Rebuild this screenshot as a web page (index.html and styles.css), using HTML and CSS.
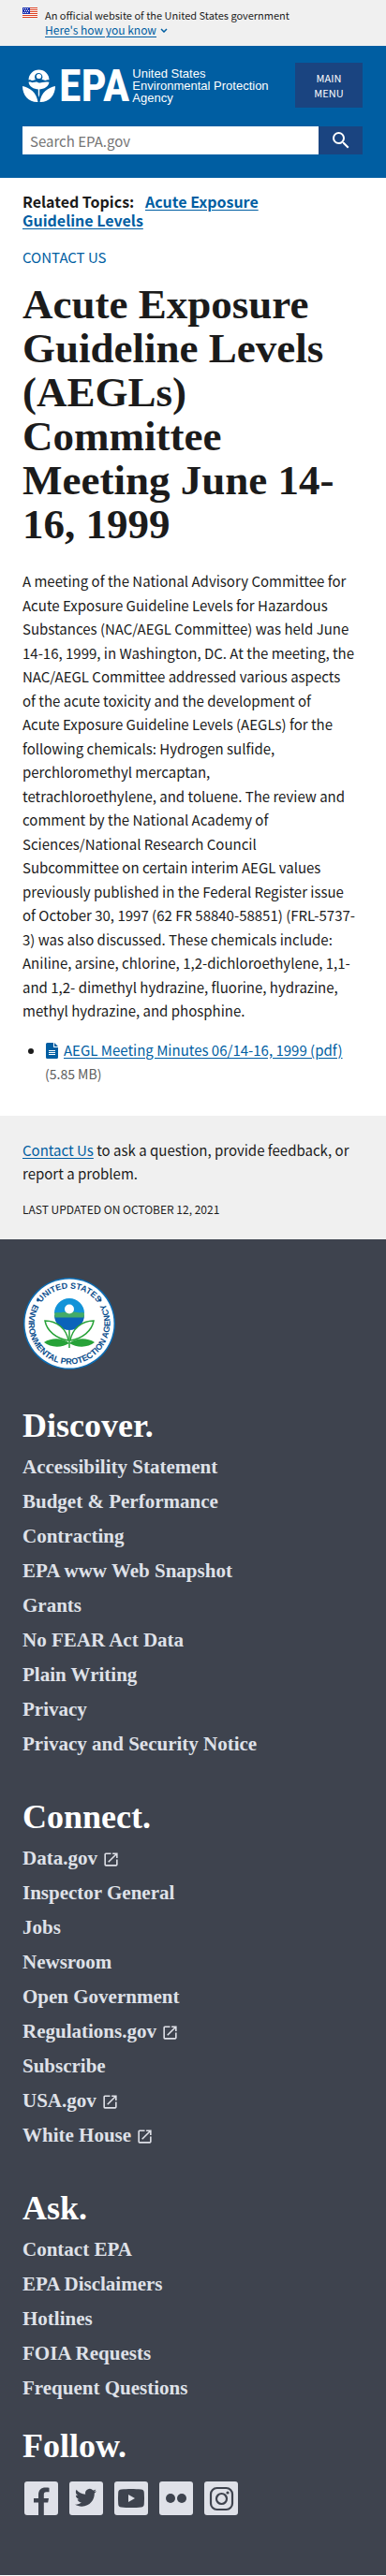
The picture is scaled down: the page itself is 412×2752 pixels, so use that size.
FILE: index.html
```html
<!DOCTYPE html>
<html lang="en">
<head>
<meta charset="utf-8">
<meta name="viewport" content="width=device-width, initial-scale=1">
<title>Acute Exposure Guideline Levels (AEGLs) Committee Meeting June 14-16, 1999 | US EPA</title>
<link rel="stylesheet" href="styles.css">
</head>
<body>
<svg class="sprite" aria-hidden="true">
  <symbol id="external" viewBox="0 0 24 24"><path d="M19 19H5V5h7V3H5a2 2 0 0 0-2 2v14a2 2 0 0 0 2 2h14c1.100 0 2-.9 2-2v-7h-2v7zM14 3v2h3.590l-9.830 9.830 1.410 1.410L19 6.410V10h2V3h-7z"/></symbol>
</svg>

<section class="banner" aria-label="Official website of the United States government">
  <svg class="banner-flag" viewBox="0 0 16 11" aria-hidden="true">
    <path fill="#fff" d="M0 0h16v11H0z"/>
    <path fill="#db3e1f" d="M0 0h16v1H0zM0 2h16v1H0zM0 4h16v1H0zM0 6h16v1H0zM0 8h16v1H0zM0 10h16v1H0z"/>
    <path fill="#1e33b1" d="M0 0h8v7H0z"/>
    <path fill="#fff" d="M1 1h1v1H1zM3 1h1v1H3zM5 1h1v1H5zM2 3h1v1H2zM4 3h1v1H4zM6 3h1v1H6zM1 5h1v1H1zM3 5h1v1H3zM5 5h1v1H5z"/>
  </svg>
  <div class="banner-text">
    <p>An official website of the United States government</p>
    <button class="banner-button" type="button"><span>Here's how you know</span><svg viewBox="0 0 8 5" aria-hidden="true"><path d="M1 1l3 3 3-3" fill="none" stroke="currentColor" stroke-width="1.500"/></svg></button>
  </div>
</section>

<header class="header">
  <div class="header-top">
    <a class="logo" href="#" aria-label="United States Environmental Protection Agency home">
      <svg class="logo-mark" viewBox="0 0 36 37" fill="#fff" aria-hidden="true">
        <path d="M6.500 12.500a11 11 0 0 1 22 0c-1.500-1-3 .8-5 .3-1.500-.6-2.300-1-3.500-.4a4.200 4.200 0 1 0-5.600 0c-1.300-.5-2 .5-3.400.5-2 .2-3-1.400-4.500-.4z"/>
        <circle cx="17.500" cy="8.500" r="2.600"/>
        <path d="M6.500 14.800c2-.8 3 .7 5 .3 2-.3 3-.8 4.700-.2 2 .7 3.300.6 5 .1 2.600-.6 4.300-.7 7.300-.2-.8 4.600-5 7.600-11 7.600s-10.200-3-11-7.600z"/>
        <path d="M0 19c8 1.500 15 7 16.500 17C7 36.500 0 29 0 19zM35 19c-8 1.500-15 7-16.500 17C28 36.500 35 29 35 19z"/>
        <path d="M16.800 22h1.400v6l-.7 3-.7-3z"/>
      </svg>
      <span class="logo-letters">EPA</span>
      <span class="logo-name">United States<br>Environmental Protection<br>Agency</span>
    </a>
    <button class="menu-button" type="button">MAIN MENU</button>
  </div>
  <form class="search" role="search">
    <input class="search-input" type="search" placeholder="Search EPA.gov" aria-label="Search EPA.gov">
    <button class="search-button" type="button" aria-label="Search">
      <svg viewBox="0 0 24 24" aria-hidden="true"><path fill="#fff" d="M15.500 14h-.79l-.28-.27A6.471 6.471 0 0 0 16 9.500 6.500 6.500 0 1 0 9.500 16c1.610 0 3.090-.59 4.230-1.570l.27.28v.79l5 4.990L20.490 19l-4.990-5zm-6 0C7.010 14 5 11.990 5 9.500S7.010 5 9.500 5 14 7.010 14 9.500 11.990 14 9.500 14z"/></svg>
    </button>
  </form>
</header>

<main class="main">
  <p class="related">Related Topics: <a href="#">Acute Exposure Guideline Levels</a></p>
  <p class="contact"><a href="#">CONTACT US</a></p>
  <h1 class="title">Acute Exposure Guideline Levels (AEGLs) Committee Meeting June 14-16, 1999</h1>
  <p class="body-text">A meeting of the National Advisory Committee for<br>Acute Exposure Guideline Levels for Hazardous<br>Substances (NAC/AEGL Committee) was held June<br>14-16, 1999, in Washington, DC. At the meeting, the<br>NAC/AEGL Committee addressed various aspects<br>of the acute toxicity and the development of<br>Acute Exposure Guideline Levels (AEGLs) for the<br>following chemicals: Hydrogen sulfide,<br>perchloromethyl mercaptan,<br>tetrachloroethylene, and toluene. The review and<br>comment by the National Academy of<br>Sciences/National Research Council<br>Subcommittee on certain interim AEGL values<br>previously published in the Federal Register issue<br>of October 30, 1997 (62 FR 58840-58851) (FRL-5737-<br>3) was also discussed. These chemicals include:<br>Aniline, arsine, chlorine, 1,2-dichloroethylene, 1,1-<br>and 1,2- dimethyl hydrazine, fluorine, hydrazine,<br>methyl hydrazine, and phosphine.</p>
  <ul class="files">
    <li><svg class="file-icon" viewBox="0 0 13 17" aria-hidden="true"><path fill="#005ea2" d="M1.500 0H8v5h5v10.500a1.500 1.500 0 0 1-1.500 1.500h-10A1.500 1.500 0 0 1 0 15.500v-14A1.500 1.500 0 0 1 1.500 0zM9 0l4 4H9z"/><path fill="#fff" d="M3 8h7v1H3zM3 10h7v1H3zM3 12h7v1H3z"/></svg><a href="#">AEGL Meeting Minutes 06/14-16, 1999 (pdf)</a> <span class="file-size">(5.85 MB)</span></li>
  </ul>
</main>

<section class="feedback">
  <p><a href="#">Contact Us</a> to ask a question, provide feedback, or report a problem.</p>
  <p class="updated">LAST UPDATED ON OCTOBER 12, 2021</p>
</section>

<footer class="footer">
  <svg class="seal" viewBox="0 0 100 100" role="img" aria-label="United States Environmental Protection Agency seal">
    <defs>
      <path id="arc-top" d="M12.500 50a37.500 37.500 0 0 1 75 0"/>
      <path id="arc-bottom" d="M22.100 16.800a43.400 43.400 0 1 0 55.800 0"/>
    </defs>
    <circle cx="50" cy="50" r="49" fill="#0b6cb4"/>
    <circle cx="50" cy="50" r="47.500" fill="#fff"/>
    <g class="seal-text">
      <text><textPath href="#arc-top" startOffset="50%">UNITED STATES</textPath></text>
      <text><textPath href="#arc-bottom" startOffset="50%">ENVIRONMENTAL PROTECTION AGENCY</textPath></text>
    </g>
    <circle cx="16.500" cy="25" r="1.500" fill="#0a4d8c"/><circle cx="83" cy="25" r="1.500" fill="#0a4d8c"/>
    <path fill="#1293d8" d="M34 39a16 16 0 0 1 32 0z"/>
    <path fill="#0b63ba" d="M34 41a16 16 0 0 0 32 0z"/>
    <path fill="#43ab68" d="M34.200 38.500c3-1 5 .5 8-.5s5 .5 8 0 5-1 8 0 5 0 7.600.5c.4 2 .1 3.500-.3 5H34.600c-.4-1.500-.6-3-.4-5z"/>
    <circle cx="50" cy="34.500" r="5" fill="#fff"/>
    <g fill="#fff" stroke="#27a238" stroke-width="1.500"><path d="M50 57v19"/><path d="M24 47c13 0 23 9 25 21C36 66 26 58 24 47zM76 47c-13 0-23 9-25 21C64 66 74 58 76 47z"/></g>
    <path fill="#27a238" d="M23 70c8-5 20-5 27 1-8 5-20 5-27-1zM77 70c-8-5-20-5-27 1 8 5 20 5 27-1z"/>
  </svg>

  <nav class="group" aria-labelledby="discover">
    <h2 id="discover">Discover.</h2>
    <ul>
      <li><a href="#">Accessibility Statement</a></li>
      <li><a href="#">Budget &amp; Performance</a></li>
      <li><a href="#">Contracting</a></li>
      <li><a href="#">EPA www Web Snapshot</a></li>
      <li><a href="#">Grants</a></li>
      <li><a href="#">No FEAR Act Data</a></li>
      <li><a href="#">Plain Writing</a></li>
      <li><a href="#">Privacy</a></li>
      <li><a href="#">Privacy and Security Notice</a></li>
    </ul>
  </nav>
  <nav class="group" aria-labelledby="connect">
    <h2 id="connect">Connect.</h2>
    <ul>
      <li><a href="#">Data.gov <svg><use href="#external"/></svg></a></li>
      <li><a href="#">Inspector General</a></li>
      <li><a href="#">Jobs</a></li>
      <li><a href="#">Newsroom</a></li>
      <li><a href="#">Open Government</a></li>
      <li><a href="#">Regulations.gov <svg><use href="#external"/></svg></a></li>
      <li><a href="#">Subscribe</a></li>
      <li><a href="#">USA.gov <svg><use href="#external"/></svg></a></li>
      <li><a href="#">White House <svg><use href="#external"/></svg></a></li>
    </ul>
  </nav>
  <nav class="group" aria-labelledby="ask">
    <h2 id="ask">Ask.</h2>
    <ul>
      <li><a href="#">Contact EPA</a></li>
      <li><a href="#">EPA Disclaimers</a></li>
      <li><a href="#">Hotlines</a></li>
      <li><a href="#">FOIA Requests</a></li>
      <li><a href="#">Frequent Questions</a></li>
    </ul>
  </nav>
  <section class="follow" aria-labelledby="follow">
    <h2 id="follow">Follow.</h2>
    <div class="social">
      <a href="#" aria-label="Facebook"><svg viewBox="0 0 36 36"><path d="M15 36V22.500h-5V18h5v-3.500C15 9 18 6.500 22.500 6.500c2 0 3.500.2 4 .3v4.500h-3c-2.200 0-2.700 1.200-2.700 2.700v4h5.200l-.8 4.500h-4.400V36z"/></svg></a>
      <a href="#" aria-label="Twitter"><svg viewBox="0 0 36 36"><path d="M29 10.200c-.9.400-1.800.6-2.700.8 1-.6 1.700-1.500 2-2.600-.9.500-1.900.9-3 1.100A4.700 4.700 0 0 0 17.200 13.800c-3.900-.2-7.400-2.100-9.700-5-1.300 2.100-.6 4.900 1.500 6.300-.8 0-1.500-.2-2.100-.6 0 2.300 1.600 4.300 3.800 4.700-.7.200-1.400.2-2.100.1.600 1.900 2.300 3.200 4.400 3.300a9.500 9.500 0 0 1-7 2c2.100 1.300 4.600 2.100 7.300 2.100 8.800 0 13.800-7.400 13.500-14.100.9-.7 1.700-1.500 2.200-2.400z"/></svg></a>
      <a href="#" aria-label="YouTube"><svg viewBox="0 0 36 36"><path fill-rule="evenodd" d="M7.500 8.500c6-.7 15-.7 21 0 2.300.2 3.200 1.300 3.300 3.500.3 4 .3 8 0 12-.1 2.200-1 3.300-3.300 3.500-6 .7-15 .7-21 0-2.300-.2-3.200-1.300-3.300-3.500-.3-4-.3-8 0-12 .1-2.200 1-3.300 3.300-3.500zM15 14v8l7-4z"/></svg></a>
      <a href="#" aria-label="Flickr"><svg viewBox="0 0 36 36"><circle cx="12" cy="18" r="5"/><circle cx="24" cy="18" r="5"/></svg></a>
      <a href="#" aria-label="Instagram"><svg viewBox="0 0 36 36"><g fill="none" stroke="#3e434e" stroke-width="2.200"><rect x="7" y="7" width="23" height="23" rx="6.500"/><circle cx="18.500" cy="18.500" r="5.500"/></g><circle cx="25" cy="12" r="1.600"/></svg></a>
    </div>
  </section>
</footer>
</body>
</html>
```
FILE: styles.css
```css
*, *::before, *::after { box-sizing: border-box; }

body {
  margin: 0;
  background: #fff;
  color: #1b1b1b;
  font-family: "Noto Sans CJK SC", "Noto Sans", sans-serif;
  font-size: 15px;
  line-height: 1.7;
}

h1, h2, p, ul { margin: 0; padding: 0; }
a { color: #005ea2; text-underline-offset: 2px; }
button { font-family: inherit; cursor: pointer; border: 0; padding: 0; }
.sprite { display: none; }

.banner {
  display: flex;
  gap: 8px;
  padding: 8px 24px 9px;
  background: #f0f0f0;
  font-size: 11px;
  line-height: 16px;
}
.banner-flag { width: 16px; height: 11px; flex: none; }
.banner-button {
  display: flex;
  align-items: center;
  gap: 4px;
  background: none;
  color: #005ea2;
  font-size: 12px;
  line-height: 16px;
}
.banner-button span { text-decoration: underline; text-underline-offset: 2px; }
.banner-button svg { width: 8px; height: 5px; }

.header {
  padding: 18px 25px 25px 24px;
  background: #005ea2;
}
.header-top {
  display: flex;
  justify-content: space-between;
  align-items: center;
}
.logo {
  display: flex;
  align-items: center;
  gap: 3px;
  color: #fff;
  text-decoration: none;
}
.logo-mark { width: 36px; height: 37px; flex: none; }
.logo-letters { font: bold 48px/37px "Roboto Condensed", "Open Sans Condensed", "DejaVu Sans Condensed", sans-serif; }
.logo-name {
  font: 13px/13px "Liberation Sans", Arial, sans-serif;
  white-space: nowrap;
}
.menu-button {
  width: 72px;
  padding: 8px 12px;
  background: #1a4480;
  color: #fff;
  font-size: 11px;
  line-height: 16px;
}
.search { display: flex; margin-top: 20px; }
.search-input {
  flex: 1;
  min-width: 0;
  height: 30px;
  padding: 0 8px;
  border: 0;
  border-radius: 0;
  background: #fff;
  color: #1b1b1b;
  font: 15px "Noto Sans CJK SC", sans-serif;
  appearance: none;
}
.search-input::placeholder { color: #757575; }
.search-button {
  display: grid;
  place-items: center;
  width: 47px;
  background: #1a4480;
}
.search-button svg { width: 24px; height: 24px; }

.main { padding: 15px 24px 32px; }
.related { max-width: 300px; font-size: 16px; font-weight: bold; line-height: 20px; }
.related a { margin-left: 8px; }
.contact { margin-top: 17px; line-height: 25px; }
.contact a { text-decoration: none; }
.title {
  margin: 15px 0 24px;
  font: bold 45px/47px "Liberation Serif", serif;
}
.files { margin-top: 16px; padding-left: 24px; }
.file-icon { width: 13px; height: 17px; margin: 0 6px 0 1px; vertical-align: -3px; }
.file-size { color: #5c5c5c; font-size: 14px; line-height: 20px; }

.feedback { padding: 24px 24px 22px; background: #f0f0f0; }
.updated { margin-top: 15px; font-size: 12px; line-height: 20px; }

.footer {
  padding: 40px 24px 64px;
  background: #3e434e;
  color: #fff;
  font: bold 21px/37px "Liberation Serif", serif;
}
.seal { display: block; width: 100px; height: 100px; }
.seal-text {
  fill: #0a4d8c;
  font: bold 9px "Liberation Sans", sans-serif;
  text-anchor: middle;
}
.footer h2 { font-size: 36px; line-height: 40px; }
.footer ul { margin-top: 6px; list-style: none; }
.group { margin-top: 39px; }
.footer a { color: #dfe1e8; text-decoration: none; }
.footer li svg { width: 19px; height: 19px; fill: currentColor; vertical-align: -4px; }
.follow { margin-top: 23px; }
.social { display: flex; gap: 12px; margin: 18px 0 0 2px; }
.social a { background: #dfe1e8; border-radius: 3px; }
.social svg { display: block; width: 36px; height: 36px; fill: #3e434e; }
```
